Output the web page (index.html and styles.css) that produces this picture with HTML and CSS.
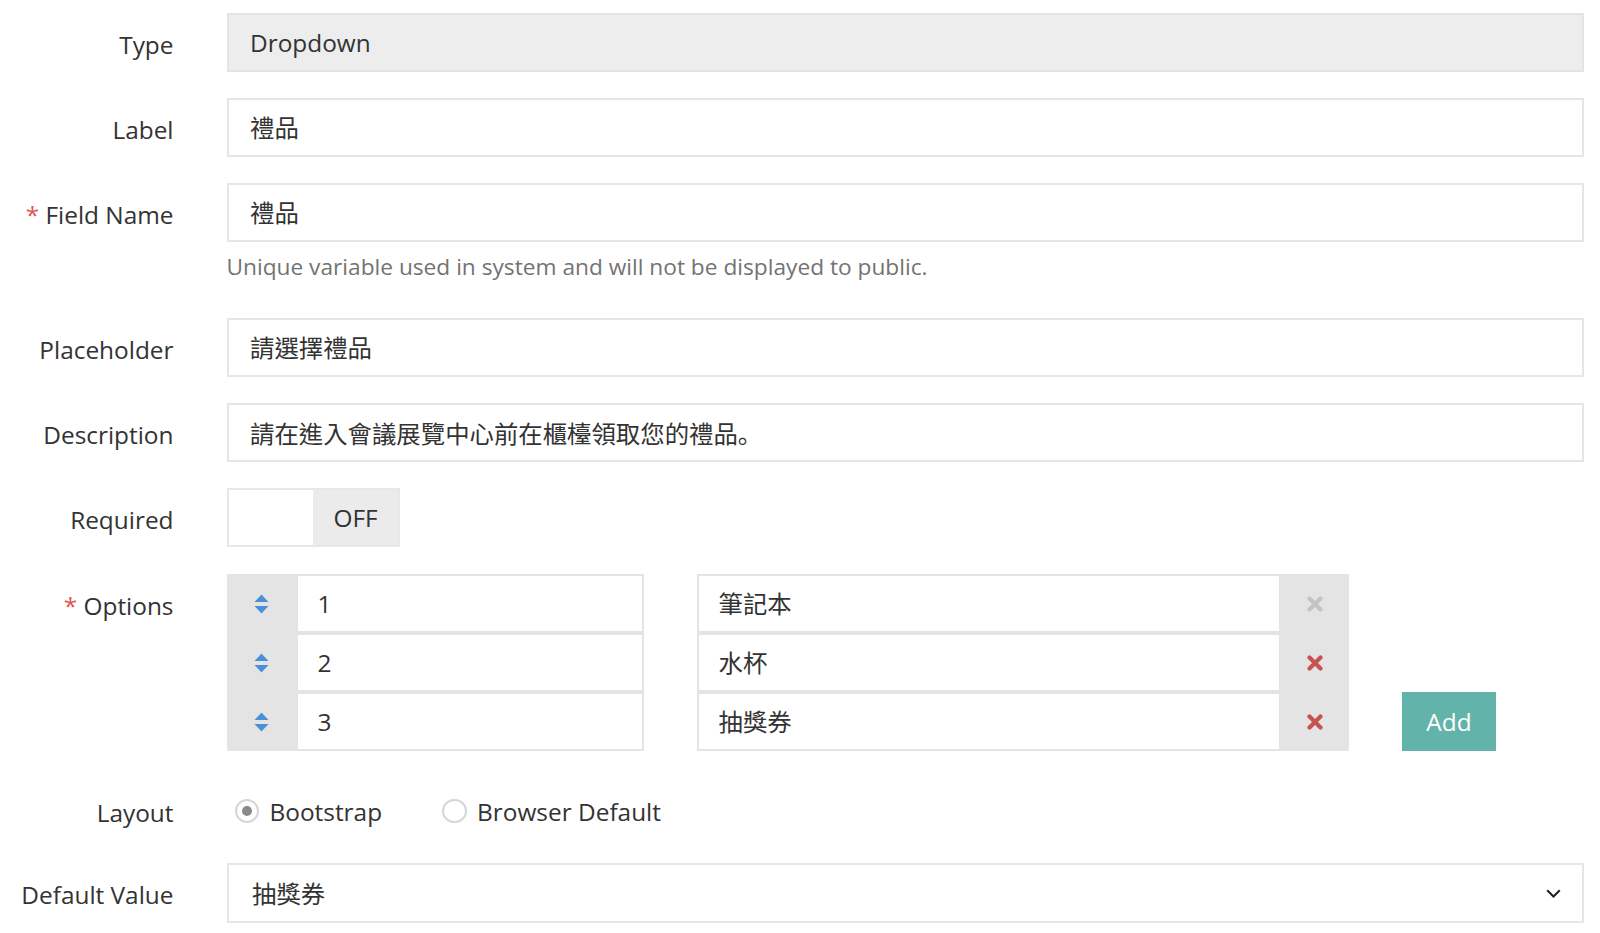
FILE: index.html
```html
<!DOCTYPE html>
<html>
<head>
<meta charset="utf-8">
<link rel="stylesheet" href="styles.css">
</head>
<body>
<form class="form">
  <div class="row">
    <label class="lbl">Type</label>
    <div class="ctl"><div class="input readonly">Dropdown</div></div>
  </div>
  <div class="row">
    <label class="lbl">Label</label>
    <div class="ctl"><div class="input">禮品</div></div>
  </div>
  <div class="row">
    <label class="lbl"><span class="req">*</span> Field Name</label>
    <div class="ctl">
      <div class="input">禮品</div>
      <div class="help">Unique variable used in system and will not be displayed to public.</div>
    </div>
  </div>
  <div class="row">
    <label class="lbl">Placeholder</label>
    <div class="ctl"><div class="input">請選擇禮品</div></div>
  </div>
  <div class="row">
    <label class="lbl">Description</label>
    <div class="ctl"><div class="input">請在進入會議展覽中心前在櫃檯領取您的禮品<span class="stop">。</span></div></div>
  </div>
  <div class="row req-row">
    <label class="lbl">Required</label>
    <div class="ctl">
      <div class="toggle"><span class="knob"></span><span class="off">OFF</span></div>
    </div>
  </div>
  <div class="row">
    <label class="lbl"><span class="req">*</span> Options</label>
    <div class="ctl options">
      <div class="optgroup left">
        <div class="optrow"><span class="grab"><svg width="15" height="20" viewBox="0 0 15 20"><path d="M7.5 0.5 L14.5 8 H0.5 Z M0.5 12 H14.5 L7.5 19.5 Z" fill="#4a90d9"/></svg></span><div class="oinput">1</div></div>
        <div class="optrow"><span class="grab"><svg width="15" height="20" viewBox="0 0 15 20"><path d="M7.5 0.5 L14.5 8 H0.5 Z M0.5 12 H14.5 L7.5 19.5 Z" fill="#4a90d9"/></svg></span><div class="oinput">2</div></div>
        <div class="optrow"><span class="grab"><svg width="15" height="20" viewBox="0 0 15 20"><path d="M7.5 0.5 L14.5 8 H0.5 Z M0.5 12 H14.5 L7.5 19.5 Z" fill="#4a90d9"/></svg></span><div class="oinput">3</div></div>
      </div>
      <div class="optgroup right">
        <div class="optrow"><div class="oinput">筆記本</div><span class="rm"><svg width="16" height="16" viewBox="0 0 16 16"><path d="M2.5 2.5 L13.5 13.5 M13.5 2.5 L2.5 13.5" stroke="#c4c4c4" stroke-width="4.2" stroke-linecap="round"/></svg></span></div>
        <div class="optrow"><div class="oinput">水杯</div><span class="rm"><svg width="16" height="16" viewBox="0 0 16 16"><path d="M2.5 2.5 L13.5 13.5 M13.5 2.5 L2.5 13.5" stroke="#c6534f" stroke-width="4.2" stroke-linecap="round"/></svg></span></div>
        <div class="optrow"><div class="oinput">抽獎券</div><span class="rm"><svg width="16" height="16" viewBox="0 0 16 16"><path d="M2.5 2.5 L13.5 13.5 M13.5 2.5 L2.5 13.5" stroke="#c6534f" stroke-width="4.2" stroke-linecap="round"/></svg></span></div>
      </div>
      <button type="button" class="add">Add</button>
    </div>
  </div>
  <div class="row layout">
    <label class="lbl">Layout</label>
    <div class="ctl radios">
      <span class="radio"><span class="circle checked"></span>Bootstrap</span>
      <span class="radio"><span class="circle"></span>Browser Default</span>
    </div>
  </div>
  <div class="row last">
    <label class="lbl">Default Value</label>
    <div class="ctl">
      <div class="input select">抽獎券<svg class="chev" width="15" height="9" viewBox="0 0 15 9"><path d="M1.2 1.2 L7.5 7.5 L13.8 1.2" fill="none" stroke="#222" stroke-width="2"/></svg></div>
    </div>
  </div>
</form>
</body>
</html>
```

FILE: styles.css
```css
* { box-sizing: border-box; }
html, body { margin: 0; padding: 0; background: #fff; }
body {
  font-family: "Open Sans", "Noto Sans CJK TC", sans-serif;
  font-size: 24.4px;
  color: #333;
}
.form { padding-top: 13px; }
.row {
  display: grid;
  grid-template-columns: 173.5px 1357.5px;
  column-gap: 53px;
  margin-bottom: 26px;
}
.row.req-row { margin-bottom: 27px; }
.row.last { margin-bottom: 0; }
.lbl {
  text-align: right;
  line-height: 59px;
  padding-top: 2px;
  height: 59px;
  white-space: nowrap;
  color: #333;
}
.req { color: #e0534f; }
.input {
  height: 59px;
  border: 2px solid #e6e6e6;
  background: #fff;
  padding: 0 21.5px;
  line-height: 55px;
  white-space: nowrap;
}
.stop { font-family: "Noto Sans CJK JP", sans-serif; }
.readonly { background: #ededed; border-color: #e4e4e4; }
.help {
  margin-top: 9px;
  line-height: 31px;
  font-size: 22.7px;
  color: #737373;
  margin-bottom: 10px;
}
.toggle {
  display: flex;
  width: 173.5px;
  height: 59px;
  border: 2px solid #e8e8e8;
}
.knob { width: 84.5px; background: #fff; }
.off {
  flex: 1;
  background: #ebebeb;
  text-align: center;
  line-height: 55px;
  color: #333;
}
.options { display: flex; align-items: flex-end; }
.optgroup {
  display: flex;
  flex-direction: column;
  background: #e4e4e4;
}
.optgroup.left { width: 417.5px; }
.optgroup.right { width: 652px; margin-left: 53px; }
.optrow { display: flex; height: 59px; }
.grab {
  width: 69.5px;
  display: flex;
  align-items: center;
  justify-content: center;
}
.rm {
  width: 68.5px;
  display: flex;
  align-items: center;
  justify-content: center;
}
.oinput {
  flex: 1;
  background: #fff;
  border: 2px solid #e4e4e4;
  padding: 0 19.5px;
  line-height: 55px;
}
.add {
  margin-left: 53px;
  width: 94px;
  height: 59px;
  border: none;
  background: #62b3aa;
  color: #fff;
  font-family: "Open Sans", sans-serif;
  font-size: 24.4px;
  padding: 0;
}
.row.layout { margin-top: 29.5px; margin-bottom: 23.5px; }
.radios { display: flex; align-items: center; height: 59px; padding-left: 8px; padding-top: 2px; }
.radio { display: flex; align-items: center; margin-right: 60px; }
.circle {
  width: 24.5px;
  height: 24.5px;
  border-radius: 50%;
  border: 2px solid #d6d6d6;
  background: #fff;
  margin-right: 10.5px;
  position: relative;
}
.circle.checked::after {
  content: "";
  position: absolute;
  left: 5.25px; top: 5.25px;
  width: 10px; height: 10px;
  border-radius: 50%;
  background: #8a8a8a;
}
.select {
  display: flex;
  justify-content: space-between;
  align-items: center;
  height: 60px;
  padding-left: 23.5px;
  padding-right: 21px;
}
.chev { flex: none; }
```
